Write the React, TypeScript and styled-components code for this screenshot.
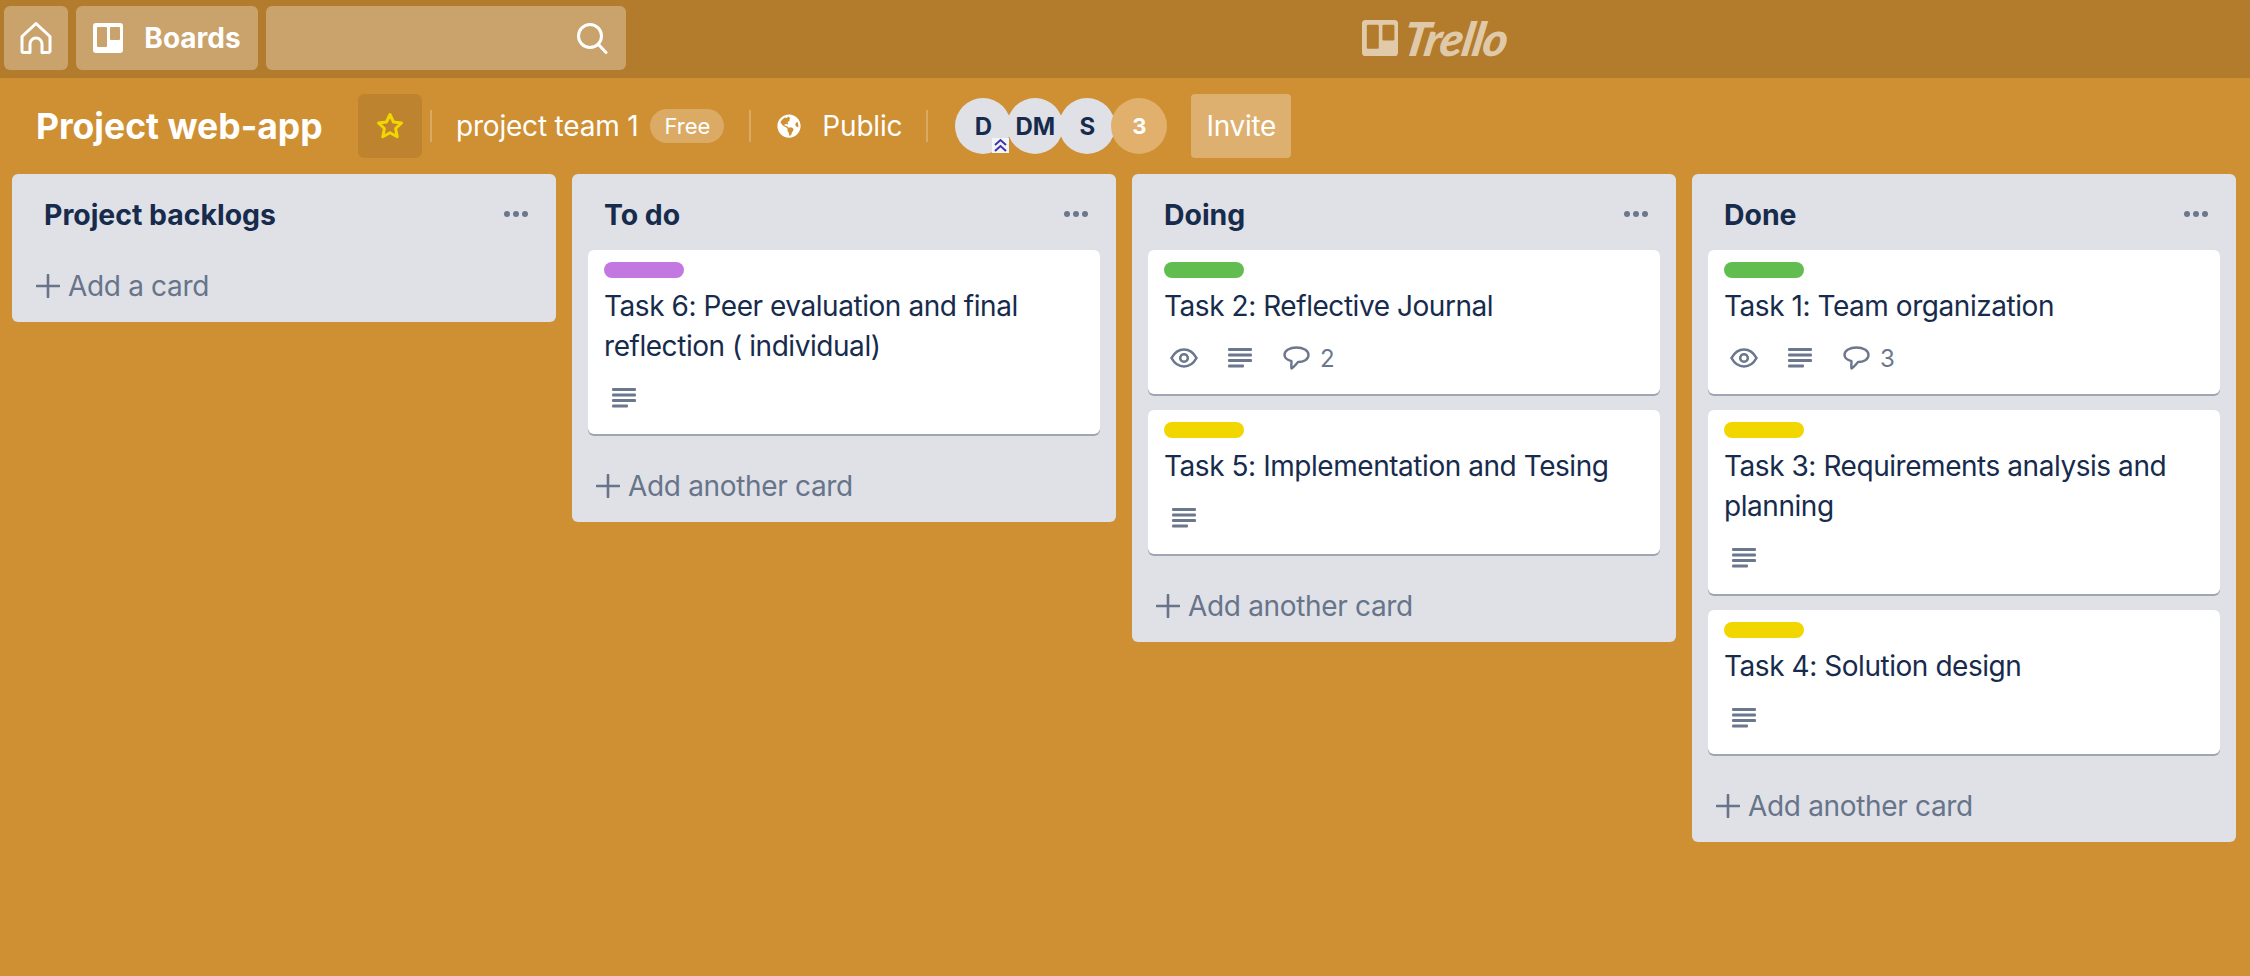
import React from "react";
import styled, { createGlobalStyle } from "styled-components";
import { FaGlobeAmericas } from "react-icons/fa";

const GlobalStyle = createGlobalStyle`
  html, body {
    margin: 0;
    padding: 0;
    height: 100%;
    background: #cf8f33;
  }

  body {
    font-family: Inter, "Noto Sans", "Liberation Sans", sans-serif;
    color: #172b4d;
    overflow: hidden;
  }
`;

const Page = styled.div`
  display: flex;
  flex-direction: column;
  height: 976px;
  background: #cf8f33;
`;

const TopBar = styled.header`
  display: flex;
  align-items: center;
  gap: 8px;
  height: 78px;
  padding: 6px 4px 8px;
  box-sizing: border-box;
  background: #b27c2c;
`;

const TopButton = styled.div`
  display: flex;
  align-items: center;
  justify-content: center;
  height: 64px;
  border-radius: 6px;
  background: rgba(255, 255, 255, 0.3);
  color: #fff;
`;

const HomeButton = styled(TopButton)`
  width: 64px;
`;

const BoardsButton = styled(TopButton)`
  width: 182px;
  gap: 21px;
  font-size: 28px;
  font-weight: 700;
`;

const SearchBox = styled(TopButton)`
  width: 360px;
  justify-content: flex-end;
  padding-right: 18px;
  box-sizing: border-box;
`;

const Logo = styled.div`
  display: flex;
  align-items: center;
  gap: 6px;
  margin-left: 728px;
  color: rgba(255, 255, 255, 0.6);
`;

const LogoWord = styled.span`
  font-family: Lato, sans-serif;
  font-size: 47px;
  line-height: 1;
  font-style: italic;
  font-weight: 900;
  letter-spacing: -1px;
  transform: skewX(-10deg);
`;

const BoardBar = styled.div`
  display: flex;
  align-items: center;
  height: 96px;
  padding-left: 36px;
  color: #fff;
`;

const BoardTitle = styled.h1`
  width: 322px;
  margin: 0;
  font-size: 35.5px;
  font-weight: 700;
  white-space: nowrap;
`;

const StarButton = styled.div`
  display: flex;
  align-items: center;
  justify-content: center;
  width: 64px;
  height: 64px;
  border-radius: 6px;
  background: rgba(0, 0, 0, 0.08);
`;

const Divider = styled.span<{ $before: number; $after: number }>`
  width: 2px;
  height: 32px;
  margin: 0 ${(p) => p.$after}px 0 ${(p) => p.$before}px;
  background: rgba(255, 255, 255, 0.24);
`;

const BarText = styled.span`
  font-size: 28px;
  letter-spacing: -0.2px;
  white-space: nowrap;
`;

const FreeBadge = styled.span`
  display: flex;
  align-items: center;
  justify-content: center;
  width: 74px;
  height: 34px;
  margin: 0 17px 0 12px;
  border-radius: 17px;
  background: rgba(255, 255, 255, 0.25);
  font-size: 22px;
`;

const PublicIcon = styled(FaGlobeAmericas)`
  margin-right: 21px;
  font-size: 24px;
`;

const Avatars = styled.div`
  display: flex;
  margin-right: 28px;
`;

const Avatar = styled.div<{ $more?: boolean }>`
  position: relative;
  display: flex;
  align-items: center;
  justify-content: center;
  width: 56px;
  height: 56px;
  margin-right: -4px;
  border-radius: 50%;
  background: ${(p) => (p.$more ? "#e0b06c" : "#dfe1e6")};
  color: ${(p) => (p.$more ? "#fff" : "#172b4d")};
  font-size: ${(p) => (p.$more ? 22 : 24)}px;
  font-weight: 700;
`;

const AdminMark = styled.svg`
  position: absolute;
  left: 37px;
  bottom: 1px;
  background: #f4f5f7;
`;

const InviteButton = styled.div`
  display: flex;
  align-items: center;
  justify-content: center;
  width: 100px;
  height: 64px;
  border-radius: 4px;
  background: rgba(255, 255, 255, 0.3);
  font-size: 28px;
  letter-spacing: -0.3px;
`;

const Lists = styled.main`
  display: flex;
  align-items: flex-start;
  gap: 16px;
  padding: 0 12px;
`;

const List = styled.section`
  width: 544px;
  padding: 0 16px;
  box-sizing: border-box;
  flex-shrink: 0;
  border-radius: 6px;
  background: #dfe1e6;
`;

const ListHeader = styled.div`
  display: flex;
  align-items: center;
  justify-content: space-between;
  height: 76px;
  padding: 0 12px 0 16px;
`;

const ListTitle = styled.h2`
  margin: 4px 0 0;
  font-size: 28.4px;
  font-weight: 700;
`;

const Dots = styled.span`
  display: flex;
  gap: 3px;
  margin-top: 4px;

  i {
    width: 6px;
    height: 6px;
    border-radius: 50%;
    background: #6b778c;
  }
`;

const Card = styled.article`
  margin-bottom: 16px;
  padding: 12px 16px 16px;
  border-radius: 6px;
  background: #fff;
  box-shadow: 0 2px 0 rgba(9, 30, 66, 0.3);
`;

const Label = styled.div<{ $color: string }>`
  width: 80px;
  height: 16px;
  border-radius: 8px;
  background: ${(p) => p.$color};
`;

const CardTitle = styled.div`
  margin-top: 8px;
  font-size: 28px;
  line-height: 40px;
  letter-spacing: -0.45px;
`;

const Badges = styled.div`
  display: flex;
  align-items: center;
  gap: 24px;
  height: 40px;
  margin-top: 12px;
  padding-left: 4px;
  color: #6b778c;
`;

const Badge = styled.span`
  display: flex;
  align-items: center;
  gap: 8px;
  font-size: 24px;
`;

const IconBox = styled.span`
  display: flex;
  align-items: center;
  justify-content: center;
  width: 32px;
  height: 32px;
`;

const AddRow = styled.div`
  display: flex;
  align-items: center;
  gap: 8px;
  height: 72px;
  padding-left: 8px;
  color: #67748a;
  font-size: 28px;
  letter-spacing: -0.33px;
`;

const HomeIcon = () => (
  <svg width="34" height="34" viewBox="0 0 34 34" fill="none" stroke="currentColor" strokeWidth="3" strokeLinejoin="round">
    <path d="M3 15.5 17 2.5l14 13V30a1.5 1.5 0 0 1-1.5 1.5H23V23a6 6 0 0 0-12 0v8.5H4.500A1.500 1.500 0 0 1 3 30z" />
  </svg>
);

const BoardIcon = ({ size }: { size: number }) => (
  <svg width={size} height={size} viewBox="0 0 30 30" fill="currentColor">
    <path
      fillRule="evenodd"
      d="M3 0h24a3 3 0 0 1 3 3v24a3 3 0 0 1-3 3H3a3 3 0 0 1-3-3V3a3 3 0 0 1 3-3zm2 4a1 1 0 0 0-1 1v18a1 1 0 0 0 1 1h8a1 1 0 0 0 1-1V5a1 1 0 0 0-1-1zm13 0a1 1 0 0 0-1 1v11a1 1 0 0 0 1 1h8a1 1 0 0 0 1-1V5a1 1 0 0 0-1-1z"
    />
  </svg>
);

const SearchIcon = () => (
  <svg width="32" height="32" viewBox="0 0 32 32" fill="none" stroke="currentColor" strokeWidth="3" strokeLinecap="round">
    <circle cx="14" cy="14" r="11.500" />
    <path d="M22.500 22.500 30 30.500" />
  </svg>
);

const StarIcon = () => (
  <svg width="30" height="30" viewBox="0 0 30 30" fill="none" stroke="#f2d600" strokeWidth="3" strokeLinejoin="round">
    <path d="M15 3.500 18.500 11l8 1-5.900 5.500 1.600 8.200L15 21.700l-7.200 4 1.600-8.200L3.500 12l8-1z" />
  </svg>
);

const EyeIcon = () => (
  <svg width="28" height="20" viewBox="0 0 28 20" fill="none" stroke="currentColor" strokeWidth="2.600">
    <path d="M1.500 10C4.500 4.500 9 1.500 14 1.500S23.500 4.500 26.500 10C23.500 15.500 19 18.500 14 18.500S4.500 15.500 1.500 10z" />
    <circle cx="14" cy="10" r="3.800" />
  </svg>
);

const DescriptionIcon = () => (
  <svg width="24" height="20" viewBox="0 0 24 20" fill="currentColor">
    <rect y="0" width="24" height="3" rx="1" />
    <rect y="5.500" width="24" height="3" rx="1" />
    <rect y="11" width="24" height="3" rx="1" />
    <rect y="16.500" width="16" height="3" rx="1" />
  </svg>
);

const CommentIcon = () => (
  <svg width="27" height="24" viewBox="0 0 27 24" fill="none" stroke="currentColor" strokeWidth="2.400" strokeLinejoin="round">
    <path d="M13.500 1.500C20 1.500 25.500 4.500 25.500 9S20.500 16 15 16c-2 2.500-4 5-6.500 6.500-.5-2 0-5 0-7.300C4 14 1.500 12 1.500 9c0-4.500 5.500-7.500 12-7.500z" />
  </svg>
);

const PlusIcon = () => (
  <svg width="24" height="24" viewBox="0 0 24 24" stroke="currentColor" strokeWidth="2.600" strokeLinecap="round">
    <path d="M12 1v22M1 12h22" />
  </svg>
);

type CardData = {
  label: string;
  title: string;
  watched?: boolean;
  comments?: number;
};

const GREEN = "#61bd4f";
const YELLOW = "#f2d600";
const PURPLE = "#c377e0";

const board: { title: string; add: string; cards: CardData[] }[] = [
  { title: "Project backlogs", add: "Add a card", cards: [] },
  {
    title: "To do",
    add: "Add another card",
    cards: [{ label: PURPLE, title: "Task 6: Peer evaluation and final reflection ( individual)" }],
  },
  {
    title: "Doing",
    add: "Add another card",
    cards: [
      { label: GREEN, title: "Task 2: Reflective Journal", watched: true, comments: 2 },
      { label: YELLOW, title: "Task 5: Implementation and Tesing" },
    ],
  },
  {
    title: "Done",
    add: "Add another card",
    cards: [
      { label: GREEN, title: "Task 1: Team organization", watched: true, comments: 3 },
      { label: YELLOW, title: "Task 3: Requirements analysis and planning" },
      { label: YELLOW, title: "Task 4: Solution design" },
    ],
  },
];

export default function App() {
  return (
    <Page>
      <GlobalStyle />
      <TopBar>
        <HomeButton>
          <HomeIcon />
        </HomeButton>
        <BoardsButton>
          <BoardIcon size={30} />
          Boards
        </BoardsButton>
        <SearchBox>
          <SearchIcon />
        </SearchBox>
        <Logo>
          <BoardIcon size={36} />
          <LogoWord>Trello</LogoWord>
        </Logo>
      </TopBar>

      <BoardBar>
        <BoardTitle>Project web-app</BoardTitle>
        <StarButton>
          <StarIcon />
        </StarButton>
        <Divider $before={8} $after={24} />
        <BarText>project team 1</BarText>
        <FreeBadge>Free</FreeBadge>
        <Divider $before={8} $after={26} />
        <PublicIcon />
        <BarText>Public</BarText>
        <Divider $before={24} $after={27} />
        <Avatars>
          <Avatar>
            D
            <AdminMark width="17" height="15" viewBox="0 0 17 15" fill="none" stroke="#3a37ad" strokeWidth="2">
              <path d="M3 7l5.500-5L14 7M3 13l5.500-5 5.500 5" />
            </AdminMark>
          </Avatar>
          <Avatar>DM</Avatar>
          <Avatar>S</Avatar>
          <Avatar $more>3</Avatar>
        </Avatars>
        <InviteButton>Invite</InviteButton>
      </BoardBar>

      <Lists>
        {board.map((list) => (
          <List key={list.title}>
            <ListHeader>
              <ListTitle>{list.title}</ListTitle>
              <Dots>
                <i />
                <i />
                <i />
              </Dots>
            </ListHeader>
            {list.cards.map((card) => (
              <Card key={card.title}>
                <Label $color={card.label} />
                <CardTitle>{card.title}</CardTitle>
                <Badges>
                  {card.watched && (
                    <IconBox>
                      <EyeIcon />
                    </IconBox>
                  )}
                  <IconBox>
                    <DescriptionIcon />
                  </IconBox>
                  {card.comments !== undefined && (
                    <Badge>
                      <IconBox>
                        <CommentIcon />
                      </IconBox>
                      {card.comments}
                    </Badge>
                  )}
                </Badges>
              </Card>
            ))}
            <AddRow>
              <PlusIcon />
              {list.add}
            </AddRow>
          </List>
        ))}
      </Lists>
    </Page>
  );
}
